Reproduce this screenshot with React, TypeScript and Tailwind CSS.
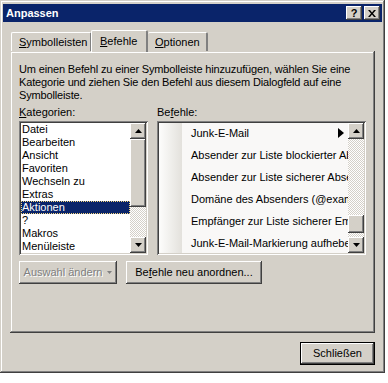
import React from "react";

// classic Win2000 "Anpassen" dialog (Outlook customize, Befehle tab)
const raised =
  "shadow-[inset_-1px_-1px_#404040,inset_1px_1px_#ffffff,inset_-2px_-2px_#808080,inset_2px_2px_#d4d0c8]";
const windowFrame =
  "shadow-[inset_-1px_-1px_#404040,inset_1px_1px_#d4d0c8,inset_-2px_-2px_#808080,inset_2px_2px_#ffffff]";
const sunken =
  "shadow-[inset_1px_1px_#808080,inset_-1px_-1px_#ffffff,inset_2px_2px_#404040,inset_-2px_-2px_#d4d0c8]";
const dither =
  "bg-[image:repeating-conic-gradient(#d4d0c8_0%_25%,#ffffff_0%_50%)] bg-[length:2px_2px]";

const categories = [
  "Datei",
  "Bearbeiten",
  "Ansicht",
  "Favoriten",
  "Wechseln zu",
  "Extras",
  "Aktionen",
  "?",
  "Makros",
  "Menüleiste",
];

const commands = [
  "Junk-E-Mail",
  "Absender zur Liste blockierter Absender hinzufügen",
  "Absender zur Liste sicherer Absender hinzufügen",
  "Domäne des Absenders (@example.com) zur Liste sicherer Absender hinzufügen",
  "Empfänger zur Liste sicherer Empfänger hinzufügen",
  "Junk-E-Mail-Markierung aufheben",
];

function Arrow({ dir }: { dir: "up" | "down" }) {
  return (
    <svg width="7" height="4" viewBox="0 0 7 4">
      {dir === "up" ? (
        <polygon points="3.5,0 7,4 0,4" fill="#000" />
      ) : (
        <polygon points="0,0 7,0 3.5,4" fill="#000" />
      )}
    </svg>
  );
}

function ScrollBtn({ dir }: { dir: "up" | "down" }) {
  return (
    <div className={`w-[16px] h-[16px] bg-[#d4d0c8] flex items-center justify-center ${raised}`}>
      <Arrow dir={dir} />
    </div>
  );
}

export default function App() {
  return (
    <div className="w-[388px] h-[383px] bg-white font-['Liberation_Sans',Arial,sans-serif] text-[11px] text-black leading-[13px]">
      <div className={`w-[385px] h-[373px] bg-[#d4d0c8] p-[3px] flex flex-col ${windowFrame}`}>
        {/* title bar */}
        <div className="h-[18px] mt-[1px] bg-[#0a246a] flex items-center pl-[3px] pr-[2px]">
          <span className="text-white font-bold text-[11px] flex-1">Anpassen</span>
          <div className={`w-[16px] h-[14px] bg-[#d4d0c8] flex items-center justify-center font-bold text-[11px] leading-none ${raised}`}>
            ?
          </div>
          <div className={`w-[16px] h-[14px] ml-[2px] bg-[#d4d0c8] flex items-center justify-center ${raised}`}>
            <svg width="8" height="7" viewBox="0 0 8 7">
              <path d="M0 0h2l2 2.5L6 0h2L5 3.5 8 7H6L4 4.5 2 7H0l3-3.5z" fill="#000" />
            </svg>
          </div>
        </div>

        <div className="flex-1 flex flex-col px-[7px] pt-[8px]">
          {/* tabs */}
          <div className="flex items-end h-[21px] pl-[1px] relative z-10">
            <div className="w-[81px] h-[19px] bg-[#d4d0c8] border-l border-t border-white border-r-2 border-r-[#808080] rounded-t-[2px] flex items-center pl-[7px]">
              <span>
                <u>S</u>ymbolleisten
              </span>
            </div>
            <div className="w-[57px] h-[22px] -mb-[1px] -ml-[1px] bg-[#d4d0c8] border-l border-t border-white border-r-2 border-r-[#808080] rounded-t-[2px] flex items-center pl-[8px] pb-[1px]">
              <span>
                <u>B</u>efehle
              </span>
            </div>
            <div className="w-[60px] h-[19px] bg-[#d4d0c8] border-t border-white border-r-2 border-r-[#808080] rounded-t-[2px] flex items-center pl-[7px]">
              <span>
                <u>O</u>ptionen
              </span>
            </div>
          </div>

          {/* tab panel */}
          <div className={`h-[282px] bg-[#d4d0c8] px-[9px] pt-[12px] flex flex-col ${windowFrame}`}>
            <p className="whitespace-nowrap tracking-[-0.15px]">
              Um einen Befehl zu einer Symbolleiste hinzuzufügen, wählen Sie eine
              <br />
              Kategorie und ziehen Sie den Befehl aus diesem Dialogfeld auf eine
              <br />
              Symbolleiste.
            </p>

            <div className="flex mt-[4px] gap-[9px]">
              <div className="w-[130px] flex flex-col">
                <div className="h-[13px]">
                  <u>K</u>ategorien:
                </div>
                <div className={`mt-[2px] h-[134px] bg-white p-[2px] flex ${sunken}`}>
                  <div className="flex-1 flex flex-col overflow-hidden">
                    {categories.map((c) =>
                      c === "Aktionen" ? (
                        <div
                          key={c}
                          className="h-[13px] bg-[#0a246a] text-white pl-[1px] outline-1 outline-dotted outline-[#f5d67e] -outline-offset-1 whitespace-nowrap"
                        >
                          {c}
                        </div>
                      ) : (
                        <div key={c} className="h-[13px] pl-[1px] whitespace-nowrap">
                          {c}
                        </div>
                      )
                    )}
                  </div>
                  <div className="w-[16px] flex flex-col">
                    <ScrollBtn dir="up" />
                    <div className={`h-[68px] bg-[#d4d0c8] ${raised}`} />
                    <div className={`flex-1 ${dither}`} />
                    <ScrollBtn dir="down" />
                  </div>
                </div>
              </div>

              <div className="w-[209px] flex flex-col">
                <div className="h-[13px]">
                  Be<u>f</u>ehle:
                </div>
                <div className={`mt-[2px] h-[134px] bg-[#f9f8f7] p-[2px] flex ${sunken}`}>
                  <div className="flex-1 flex overflow-hidden">
                    <div className="w-[23px] shrink-0 bg-[linear-gradient(to_right,#fdfdfc,#e3e1dc)]" />
                    <div className="flex-1 flex flex-col overflow-hidden -mt-[1px]">
                      {commands.map((c, i) => (
                        <div key={c} className="h-[22px] shrink-0 flex items-center pl-[9px] relative whitespace-nowrap">
                          {c}
                          {i === 0 && (
                            <svg className="absolute right-[4px] top-[6px]" width="6" height="10" viewBox="0 0 6 10">
                              <polygon points="0,0 6,5 0,10" fill="#000" />
                            </svg>
                          )}
                        </div>
                      ))}
                    </div>
                  </div>
                  <div className="w-[16px] flex flex-col">
                    <ScrollBtn dir="up" />
                    <div className={`h-[76px] ${dither}`} />
                    <div className={`h-[18px] bg-[#d4d0c8] ${raised}`} />
                    <div className={`flex-1 ${dither}`} />
                    <ScrollBtn dir="down" />
                  </div>
                </div>
              </div>
            </div>

            <div className="flex mt-[6px] gap-[9px]">
              <div className={`w-[98px] h-[23px] bg-[#d4d0c8] flex items-center justify-center gap-[5px] text-[#808080] [text-shadow:1px_1px_#ffffff] ${raised}`}>
                <span>Auswahl ändern</span>
                <svg width="5" height="3" viewBox="0 0 5 3">
                  <polygon points="0,0 5,0 2.5,3" fill="#808080" />
                </svg>
              </div>
              <div className={`w-[136px] h-[23px] bg-[#d4d0c8] flex items-center justify-center ${raised}`}>
                <span>
                  Be<u>f</u>ehle neu anordnen...
                </span>
              </div>
            </div>
          </div>

          {/* bottom button */}
          <div className="flex justify-end mt-[9px]">
            <div className="w-[75px] h-[23px] border border-black">
              <div className={`w-full h-full bg-[#d4d0c8] flex items-center justify-center ${raised}`}>
                Schließen
              </div>
            </div>
          </div>
        </div>
      </div>
    </div>
  );
}
